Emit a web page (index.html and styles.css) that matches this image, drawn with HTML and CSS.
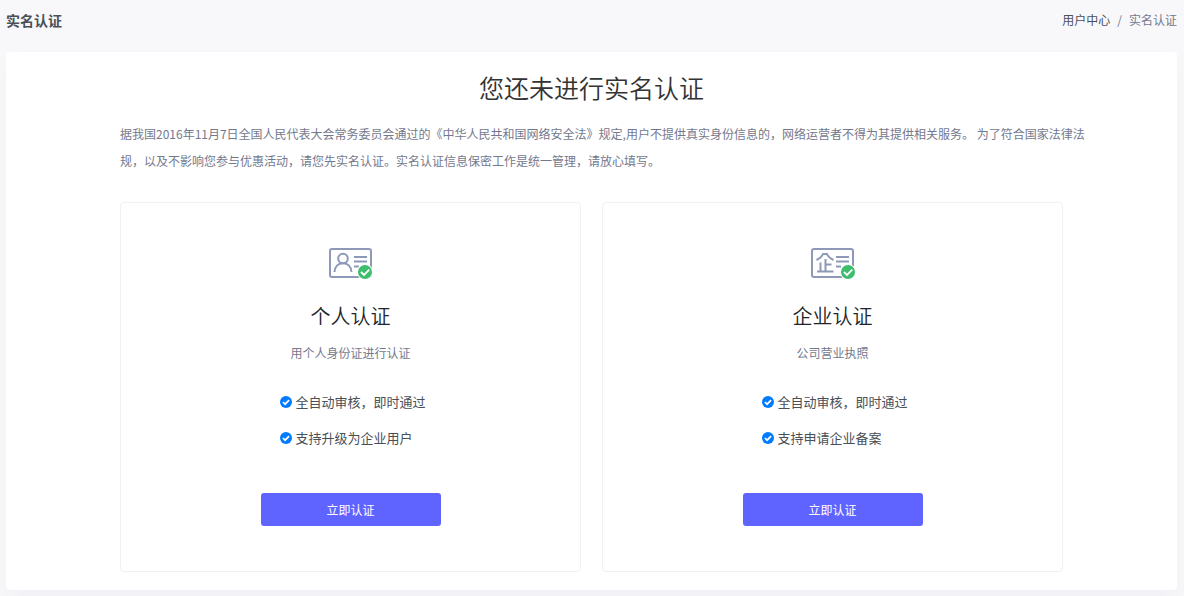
FILE: index.html
```
<!DOCTYPE html>
<html lang="zh-CN">
<head>
  <meta charset="UTF-8">
  <meta name="viewport" content="width=device-width, initial-scale=1">
  <title>实名认证</title>
  <link rel="stylesheet" href="styles.css">
</head>
<body>
<svg class="sprite" aria-hidden="true">
  <symbol id="check" viewBox="0 0 12 12">
    <circle cx="6" cy="6" r="6" fill="#007bff"/>
    <path d="M2.900 6l2.200 2.200 4-4.100" fill="none" stroke="#fff" stroke-width="1.700"/>
  </symbol>
</svg>

<header class="page-header">
  <h1 class="page-title">实名认证</h1>
  <nav class="breadcrumb" aria-label="breadcrumb">
    <a href="#">用户中心</a>
    <span class="divider">/</span>
    <span class="current">实名认证</span>
  </nav>
</header>

<main class="panel">
  <h2 class="panel-title">您还未进行实名认证</h2>
  <p class="notice">据我国2016年11月7日全国人民代表大会常务委员会通过的《中华人民共和国网络安全法》规定,用户不提供真实身份信息的，网络运营者不得为其提供相关服务。 为了符合国家法律法规，以及不影响您参与优惠活动，请您先实名认证。实名认证信息保密工作是统一管理，请放心填写。</p>

  <div class="options">
    <!-- 个人认证 -->
    <section class="option">
      <svg class="option-icon" viewBox="0 0 44 32" aria-hidden="true">
        <rect x="1" y="1" width="41" height="28" rx="2" fill="none" stroke="#8e99b8" stroke-width="2"/>
        <g fill="none" stroke="#8e99b8" stroke-width="2">
          <circle cx="14" cy="10.500" r="4.800"/>
          <path d="M5.500 24c.4-5.700 4-8.700 8.500-8.700s8.100 3 8.500 8.700"/>
          <path d="M25 9h13M25 13.500h13M25 18.500h5"/>
        </g>
        <circle cx="36" cy="24" r="8" fill="#fff"/>
        <circle cx="36" cy="24" r="7" fill="#3dbd6d"/>
        <path d="M32 24l3 3 5.300-5.300" fill="none" stroke="#fff" stroke-width="1.800"/>
      </svg>
      <h3 class="option-title">个人认证</h3>
      <p class="option-desc">用个人身份证进行认证</p>
      <ul class="features">
        <li><svg class="check" aria-hidden="true"><use href="#check"/></svg>全自动审核，即时通过</li>
        <li><svg class="check" aria-hidden="true"><use href="#check"/></svg>支持升级为企业用户</li>
      </ul>
      <button type="button" class="btn">立即认证</button>
    </section>

    <!-- 企业认证 -->
    <section class="option">
      <svg class="option-icon" viewBox="0 0 44 32" aria-hidden="true">
        <rect x="1" y="1" width="41" height="28" rx="2" fill="none" stroke="#8e99b8" stroke-width="2"/>
        <g fill="none" stroke="#8e99b8" stroke-width="2">
          <path d="M5.500 12c2.500-1 5.500-3.500 6.500-6h4c1 2.500 4 5 6.500 6"/>
          <path d="M14.500 11v12M14.500 16.500h6M9.500 14.500v8.500M6 23.500h16.500"/>
          <path d="M25 9h13M25 13.500h13M25 18.500h5"/>
        </g>
        <circle cx="37" cy="24" r="8" fill="#fff"/>
        <circle cx="37" cy="24" r="7" fill="#3dbd6d"/>
        <path d="M33 24l3 3 5.300-5.300" fill="none" stroke="#fff" stroke-width="1.800"/>
      </svg>
      <h3 class="option-title">企业认证</h3>
      <p class="option-desc">公司营业执照</p>
      <ul class="features">
        <li><svg class="check" aria-hidden="true"><use href="#check"/></svg>全自动审核，即时通过</li>
        <li><svg class="check" aria-hidden="true"><use href="#check"/></svg>支持申请企业备案</li>
      </ul>
      <button type="button" class="btn">立即认证</button>
    </section>
  </div>
</main>
</body>
</html>
```

FILE: styles.css
```
* {
    box-sizing: border-box;
}
body {
    margin: 0;
    padding: 0 7px 6px 6px;
    background-color: #f8f8fb;
    color: #495057;
    font-family: "Noto Sans CJK SC", sans-serif;
    font-size: 13px;
    line-height: 20px;
}
h1, h2, h3, p, ul {
    margin: 0;
    padding: 0;
}
.sprite {
    display: none;
}

/* header */
.page-header {
    display: flex;
    justify-content: space-between;
    align-items: center;
    padding: 10px 0 22px;
}
.page-title {
    font-size: 14px;
    font-weight: 600;
    line-height: 20px;
}
.breadcrumb {
    display: flex;
    gap: 7px;
    font-size: 12px;
}
.breadcrumb a {
    color: #495057;
    text-decoration: none;
}
.breadcrumb .divider,
.breadcrumb .current {
    color: #74788d;
}

/* main panel */
.panel {
    padding: 19px 114px 18px;
    background-color: #fff;
    border-radius: 4px;
    box-shadow: 0 12px 24px rgba(18, 38, 63, 0.03);
}
.panel-title {
    color: #333;
    font-size: 25px;
    font-weight: 350;
    line-height: 32px;
    text-align: center;
}
.notice {
    margin: 17px -28px 0 0;
    color: #74788d;
    font-size: 12px;
    line-height: 27px;
}

/* options */
.options {
    display: grid;
    grid-template-columns: 1fr 1fr;
    gap: 21px;
    margin-top: 28px;
}
.option {
    display: flex;
    flex-direction: column;
    align-items: center;
    padding: 45px 20px;
    border: 1px solid #f0f0f7;
    border-radius: 4px;
}
.option-icon {
    width: 44px;
    height: 32px;
}
.option-title {
    margin-top: 20px;
    color: #212529;
    font-size: 20px;
    font-weight: 350;
    line-height: 32px;
}
.option-desc {
    margin-top: 11px;
    color: #74788d;
    font-size: 12px;
}
.features {
    width: 142px;
    margin-top: 21px;
    list-style: none;
    line-height: 36px;
}
.features li {
    display: flex;
    align-items: center;
    gap: 4px;
    white-space: nowrap;
}
.check {
    flex: none;
    width: 12px;
    height: 12px;
}
.btn {
    width: 180px;
    height: 33px;
    margin-top: 37px;
    border: 0;
    border-radius: 3px;
    background-color: #5f63ff;
    color: #fff;
    font-family: inherit;
    font-size: 12px;
    cursor: pointer;
}
```
